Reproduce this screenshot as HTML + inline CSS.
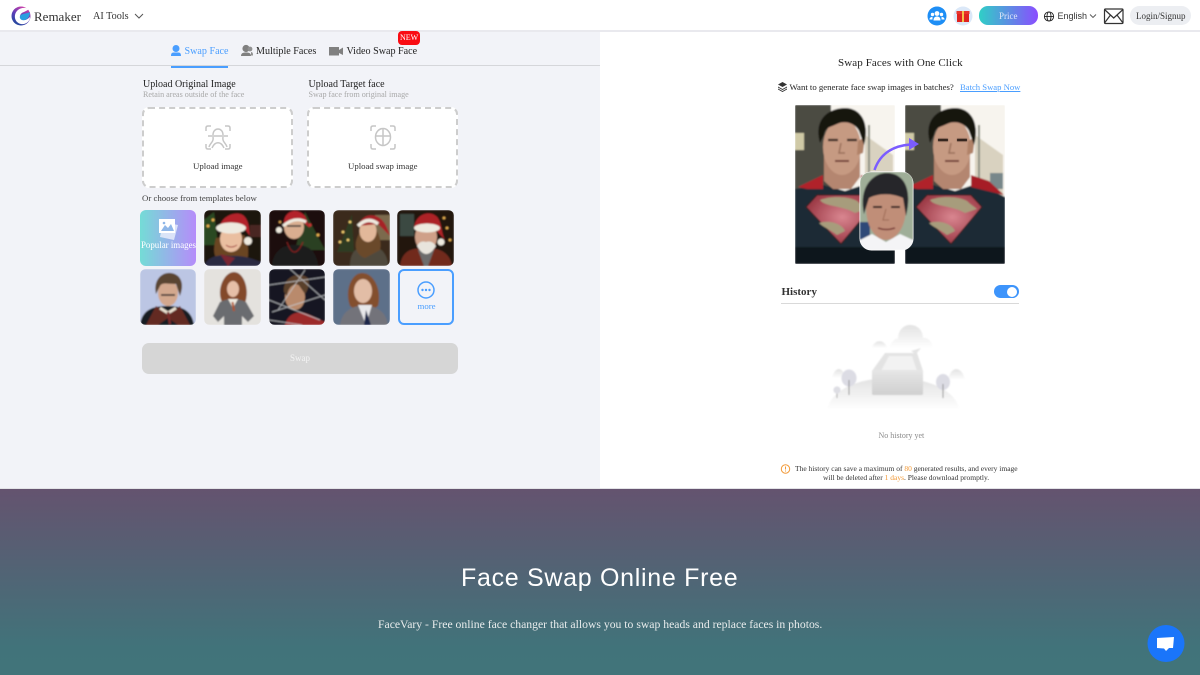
<!DOCTYPE html>
<html><head><meta charset="utf-8"><style>
html,body{margin:0;padding:0;width:1200px;height:675px;overflow:hidden;background:#f2f3f8;font-family:"Liberation Serif",serif;color:#222}
.t{position:absolute;white-space:nowrap;line-height:1}
.b{position:absolute;box-sizing:border-box}
.up{position:absolute;box-sizing:border-box;top:107px;width:151px;height:81px;background:#fff;border:2px dashed #cdcdcd;border-radius:7px}
svg{position:absolute;left:0;top:0}
</style></head><body>
<div class="b" style="left:0;top:0;width:1200px;height:30px;background:#fff"></div>
<div class="b" style="left:0;top:30px;width:1200px;height:2px;background:#e9e9ee"></div>
<div class="b" style="left:600px;top:32px;width:600px;height:456px;background:#fff"></div>
<div class="b" style="left:0;top:488px;width:1200px;height:1px;background:#e2e2e6"></div>
<div class="b" style="left:0;top:489px;width:1200px;height:186px;background:linear-gradient(#64536f,#41737a 85%,#41747a)"></div>
<div class="b" style="left:0;top:65px;width:600px;height:1px;background:#d5d6da"></div>
<div class="b" style="left:171px;top:66px;width:57px;height:1.500px;background:#4a9eff"></div>

<div class="up" style="left:142px"></div>
<div class="up" style="left:307px"></div>
<div class="b" style="left:142px;top:343px;width:316px;height:31px;background:#d6d6d6;border-radius:7px"></div>
<div class="b" style="left:979px;top:6px;width:59px;height:19px;border-radius:9px;background:linear-gradient(90deg,#2fcfc6,#8a4dff)"></div>
<div class="b" style="left:1130px;top:6px;width:61px;height:19px;border-radius:10px;background:#eceef2"></div>
<div class="b" style="left:398px;top:269px;width:56px;height:56px;border:2px solid #4a9eff;border-radius:6px"></div>
<div class="b" style="left:140px;top:210px;width:56px;height:56px;border-radius:6px;background:linear-gradient(90deg,#74dcd6,#b58cfa)"></div>
<div class="b" style="left:994px;top:285px;width:25px;height:13px;border-radius:7px;background:#3d94fb"></div>
<div class="b" style="left:1007px;top:286.500px;width:10px;height:10px;border-radius:50%;background:#fff"></div>
<div class="b" style="left:781px;top:303px;width:238px;height:1px;background:#d9d9d9"></div>
<div class="b" style="left:398px;top:31px;width:22px;height:14px;border-radius:4px;background:#f90b12"></div>

<svg width="1200" height="675" viewBox="0 0 1200 675">
<defs>
<filter id="bl"><feGaussianBlur stdDeviation="0.9"/></filter>
<filter id="bs"><feGaussianBlur stdDeviation="0.7"/></filter>
<linearGradient id="lg" x1="0.7" y1="0" x2="0.2" y2="1"><stop offset="0" stop-color="#d63fa8"/><stop offset=".5" stop-color="#5a3fb8"/><stop offset="1" stop-color="#1b4a9a"/></linearGradient>
<linearGradient id="fd" x1="0" y1="0" x2="0" y2="1"><stop offset="0" stop-color="#e2e2e2"/><stop offset="1" stop-color="#fff"/></linearGradient>
<linearGradient id="bx" x1="0" y1="0" x2="0" y2="1"><stop offset="0" stop-color="#e6e6e6"/><stop offset="1" stop-color="#cfcfcf"/></linearGradient>
<radialGradient id="sh" cx=".55" cy=".45" r=".55"><stop offset="0" stop-color="#d98690"/><stop offset="1" stop-color="#9c3a46"/></radialGradient>
<clipPath id="c1"><rect x="204" y="210" width="57" height="56" rx="6"/></clipPath>
<clipPath id="c2"><rect x="269" y="210" width="56" height="56" rx="6"/></clipPath>
<clipPath id="c3"><rect x="333" y="210" width="57" height="56" rx="6"/></clipPath>
<clipPath id="c4"><rect x="397" y="210" width="57" height="56" rx="6"/></clipPath>
<clipPath id="c5"><rect x="140" y="269" width="56" height="56" rx="6"/></clipPath>
<clipPath id="c6"><rect x="204" y="269" width="57" height="56" rx="6"/></clipPath>
<clipPath id="c7"><rect x="269" y="269" width="56" height="56" rx="6"/></clipPath>
<clipPath id="c8"><rect x="333" y="269" width="57" height="56" rx="6"/></clipPath>
<clipPath id="sl"><rect x="795" y="105" width="100" height="159" rx="1"/></clipPath>
<clipPath id="sr"><rect x="905" y="105" width="100" height="159" rx="1"/></clipPath>
<clipPath id="in"><rect x="860" y="172" width="53" height="78" rx="11"/></clipPath>
<g id="sup">
<rect x="0" y="0" width="100" height="159" fill="#f7f4ee"/>
<rect x="0" y="0" width="36" height="85" fill="#4b4b43"/>
<rect x="0" y="28" width="9" height="17" fill="#cfc9a6"/>
<path d="M70 30L98 50V110H70Z" fill="#d9d2c0"/><rect x="73" y="20" width="2" height="60" fill="#8d9084"/>
<rect x="85" y="68" width="13" height="16" fill="#78878a"/>
<path d="M0 84L28 80L50 86L68 80L92 88L100 92V159H0Z" fill="#1c2c34"/>
<path d="M3 82L28 70V84L12 84Z" fill="#b0202a"/><path d="M66 70L84 76L99 90L66 82Z" fill="#a61f28"/>
<path d="M29 50H65V72L56 84H38L29 76Z" fill="#b48670"/>
<ellipse cx="47" cy="42" rx="19" ry="28" fill="#c69a82"/>
<path d="M63 36L70 32L68 48L62 50Z" fill="#b08268"/>
<path d="M25 38C18 14 34 3 50 3C66 3 75 18 69 40L64 26C60 18 50 15 42 19C36 22 30 22 29 30Z" fill="#17120f"/>
<path d="M33 35H43M52 35H62" stroke="#33241d" stroke-width="2.200"/>
<path d="M46 38L44 48H50" stroke="#9a6f5a" stroke-width="1.500" fill="none"/>
<path d="M40 56H54" stroke="#6d3830" stroke-width="1.800"/>
<path d="M11 102L22 90H66L77 102L46 139Z" fill="url(#sh)" stroke="#2d1a1e" stroke-width="1"/>
<path d="M25 95C38 90 60 92 64 98L72 104L60 108C46 100 30 102 25 95Z" fill="#a79c7c"/>
<path d="M24 118C36 114 48 120 50 126L42 130C34 124 28 122 24 118Z" fill="#a79c7c"/>
<rect x="0" y="142" width="100" height="17" fill="#0c1216" opacity=".85"/>
</g>
</defs>

<!-- logo -->
<circle cx="21" cy="16" r="9.500" fill="url(#lg)"/>
<path d="M29 9C23 6 16 9 15 15C14 21 19 25 24 24C28 23 30 20 30 17C27 20 24 21 21 19C19 17 20 13 24 12C26 11 28 10 29 9Z" fill="#fff"/>
<path d="M30 12C27 14 22 13 20 16C19 19 22 21 25 20C28 19 30 16 30 12Z" fill="#2a9fe0"/>
<path d="M135 14L139 18L143 14" fill="none" stroke="#555" stroke-width="1"/>

<!-- tab icons -->
<circle cx="176" cy="48.500" r="3.500" fill="#4a9eff"/><path d="M171 56C171 52 173 52.500 176 52.500C179 52.500 181 52 181 56Z" fill="#4a9eff"/>
<circle cx="246" cy="48.500" r="3.600" fill="#808080"/><path d="M241 56C241 53 243 52.500 246 52.500C249 52.500 251 53 251 56Z" fill="#808080"/><circle cx="250" cy="49" r="2.400" fill="#909090"/><path d="M251 52C253 52 253 54 253 55.500H251Z" fill="#909090"/>
<rect x="329" y="47" width="10" height="8.500" fill="#808080"/><path d="M339 50L343 47.500V55L339 53Z" fill="#808080"/>

<!-- upload icons -->
<g fill="none" stroke="#c6c6c6" stroke-width="1.500">
<path d="M206 131V128Q206 126 208 126H211M225 126H228Q230 126 230 128V131M230 144V147Q230 149 228 149H225M211 149H208Q206 149 206 147V144"/>
<path d="M213 135C213 127 223 127 223 135M208 136H228M213 137C214 142 210 143 209 147M223 137C222 142 226 143 227 147M212 148C215 141 221 141 224 148"/>
<path d="M371 131V128Q371 126 373 126H376M390 126H393Q395 126 395 128V131M395 144V147Q395 149 393 149H390M376 149H373Q371 149 371 147V144"/>
<ellipse cx="383" cy="137" rx="7.500" ry="8.500"/><path d="M376 136H390M383 129V145"/>
</g>

<!-- header right icons -->
<circle cx="937" cy="16" r="9.500" fill="#1e8ef5"/>
<g fill="#fff"><circle cx="937" cy="13.500" r="2.400"/><circle cx="932.500" cy="14.500" r="1.700"/><circle cx="941.500" cy="14.500" r="1.700"/><path d="M933.500 20.500C933.500 17.500 935 16.500 937 16.500C939 16.500 940.500 17.500 940.500 20.500Z"/><path d="M929.500 19.500C929.500 17.500 931 17 932.500 17L932.500 19.500ZM944.500 19.500C944.500 17.500 943 17 941.500 17L941.500 19.500Z"/></g>
<circle cx="963" cy="16" r="9.500" fill="#dbe8f8"/>
<rect x="957" y="13" width="12" height="9" fill="#e0231f"/><rect x="956.500" y="11" width="13" height="3" fill="#e8352c"/><rect x="962" y="11" width="2" height="11" fill="#f4c04a"/>
<g fill="none" stroke="#222" stroke-width="0.900"><circle cx="1049" cy="16.500" r="4.600"/><ellipse cx="1049" cy="16.500" rx="2" ry="4.600"/><path d="M1044.400 16.500H1053.600"/></g>
<path d="M1090 14.500L1093 17.500L1096 14.500" fill="none" stroke="#555" stroke-width=".9"/>
<g fill="none" stroke="#333" stroke-width="1.200"><rect x="1104.500" y="9" width="18.500" height="14.500" rx="1"/><path d="M1104.500 9.500L1113.700 18L1123 9.500M1104.500 23L1110.500 15M1123 23L1117 15"/></g>

<!-- popular icon + more -->
<g><path d="M163 222L178 225L174 240L160 237Z" fill="#e6ecfa" opacity=".85"/><rect x="159" y="219" width="16" height="14" fill="#fff"/><path d="M161 231L165 225L168 228L171 224L174 231Z" fill="#8fb7e8"/><circle cx="164" cy="223" r="1.300" fill="#8fb7e8"/></g>
<circle cx="426" cy="290" r="8" fill="none" stroke="#4a9eff" stroke-width="1.500"/><g fill="#4a9eff"><circle cx="422.500" cy="290" r="1.200"/><circle cx="426" cy="290" r="1.200"/><circle cx="429.500" cy="290" r="1.200"/></g>

<!-- thumbs row 1 -->
<g clip-path="url(#c1)"><g filter="url(#bl)"><rect x="204" y="210" width="57" height="56" fill="#1e1410"/><path d="M204 220L214 212L218 245H204Z" fill="#2c4a20"/><circle cx="208" cy="226" r="1.500" fill="#e8b050"/><circle cx="213" cy="220" r="1.500" fill="#e8b050"/><rect x="250" y="225" width="11" height="12" fill="#4a2820"/>
<path d="M216 238C212 252 214 262 226 264H246C250 255 248 240 244 235Z" fill="#6b4524"/><ellipse cx="231" cy="239" rx="11" ry="13" fill="#eabfa0"/><path d="M204 266C208 256 220 254 231 256C245 255 255 260 261 262V266Z" fill="#2a2a42"/><path d="M220 254L235 258L228 266Z" fill="#7a2530"/><path d="M219 230C220 215 238 210 244 216C250 222 249 232 250 236L244 228Z" fill="#b4242a"/><ellipse cx="231" cy="228" rx="15" ry="5.500" fill="#eeeadf"/><circle cx="248" cy="241" r="4" fill="#eeeadf"/><path d="M226 245Q231 249 237 245" stroke="#a03a3a" fill="none"/></g></g>
<g clip-path="url(#c2)"><g filter="url(#bl)"><rect x="269" y="210" width="56" height="56" fill="#1d110c"/><path d="M305 212L325 250H295Z" fill="#2c3f20"/><circle cx="310" cy="225" r="1.600" fill="#c63030"/><circle cx="318" cy="235" r="1.500" fill="#e8b050"/><circle cx="280" cy="222" r="1.300" fill="#d8a050"/><path d="M272 266C274 248 286 245 296 245C310 245 316 252 318 266Z" fill="#1c1c1c"/><ellipse cx="294" cy="227" rx="10" ry="12" fill="#d9ae90"/><path d="M284 224C283 212 296 206 305 216L310 228L300 220Z" fill="#b3232a"/><path d="M283 226Q295 216 306 222" stroke="#eeeadf" stroke-width="3" fill="none"/><circle cx="279" cy="230" r="3" fill="#eeeadf"/><path d="M287 242Q294 262 303 242" stroke="#8a2020" fill="none"/><path d="M287 226H301" stroke="#333" stroke-width="1.500"/></g></g>
<g clip-path="url(#c3)"><g filter="url(#bl)"><rect x="333" y="210" width="57" height="56" fill="#3b2a1a"/><path d="M352 214L337 252H354Z" fill="#2e3a20"/><circle cx="343" cy="232" r="1.400" fill="#f4d070"/><circle cx="350" cy="222" r="1.400" fill="#f4d070"/><circle cx="340" cy="242" r="1.400" fill="#f4d070"/><circle cx="348" cy="240" r="1.400" fill="#f4d070"/><rect x="375" y="215" width="15" height="25" fill="#7b6a4e"/><path d="M350 266C350 250 358 246 370 246C382 246 388 256 388 266Z" fill="#4f4a3d"/><path d="M360 232C352 245 356 255 365 258L380 250C382 240 378 232 375 228Z" fill="#6b4a2a"/><ellipse cx="368" cy="231" rx="8.500" ry="11" fill="#e2b89a"/><path d="M358 226C362 214 374 212 382 220C386 224 388 230 390 236L378 224Z" fill="#a62228"/><path d="M358 226Q368 216 378 224" stroke="#eeeadf" stroke-width="3.500" fill="none"/></g></g>
<g clip-path="url(#c4)"><g filter="url(#bl)"><rect x="397" y="210" width="57" height="56" fill="#21140e"/><rect x="400" y="214" width="14" height="22" fill="#3a4a42"/><circle cx="447" cy="228" r="1.400" fill="#e8b050"/><circle cx="450" cy="240" r="1.400" fill="#e8b050"/><circle cx="444" cy="218" r="1.400" fill="#e8b050"/><path d="M400 266C402 250 412 248 426 248C442 248 450 254 452 266Z" fill="#71291f"/><path d="M418 250H434L428 266H424Z" fill="#6c6c6c"/><ellipse cx="426" cy="237" rx="11" ry="14" fill="#cfa088"/><path d="M417 246Q426 262 436 246Q432 240 426 242Q420 240 417 246Z" fill="#e8e4dc"/><path d="M414 228C416 212 432 210 438 218C442 224 441 232 445 240L434 228Z" fill="#ad2126"/><ellipse cx="427" cy="228" rx="13" ry="4.500" fill="#eeeadf"/><circle cx="441" cy="242" r="3.500" fill="#eeeadf"/></g></g>
<!-- thumbs row 2 -->
<g clip-path="url(#c5)"><g filter="url(#bl)"><rect x="140" y="269" width="56" height="56" fill="#bcc6e4"/><path d="M140 325C142 310 152 306 168 306C184 306 192 312 194 325Z" fill="#181a22"/><path d="M146 325L156 306L168 315L180 306L190 325H178L168 318L158 325Z" fill="#632a22"/><ellipse cx="168" cy="293" rx="10" ry="13" fill="#d3a88e"/><path d="M156 294C152 276 168 268 178 276C184 282 182 290 180 296L176 284C168 284 162 282 160 286Z" fill="#5a4530"/><path d="M161 295H175" stroke="#222" stroke-width="1.500"/><path d="M160 308L168 313L176 308" stroke="#e8e0d0" stroke-width="3" fill="none"/><path d="M168 312L170 324" stroke="#7a2a2a" stroke-width="2.500"/></g></g>
<g clip-path="url(#c6)"><g filter="url(#bl)"><rect x="204" y="269" width="57" height="56" fill="#e4e2de"/><path d="M222 302C216 290 224 272 234 272C244 272 250 290 245 303Z" fill="#834a2a"/><ellipse cx="233" cy="289" rx="6" ry="8" fill="#e6bfa8"/><path d="M220 302C228 298 238 298 246 302L254 316L248 322L242 316V325H224V316L218 322L213 316Z" fill="#6b6c70"/><path d="M228 299L233 308L238 299Z" fill="#f0ebe0"/><path d="M232.500 302L234 311" stroke="#b0522a" stroke-width="2"/></g></g>
<g clip-path="url(#c7)"><g filter="url(#bl)"><rect x="269" y="269" width="56" height="56" fill="#161820"/><path d="M285 325C288 312 300 310 310 315L325 322V325Z" fill="#9c2c2a"/><ellipse cx="295" cy="297" rx="10" ry="13" fill="#b98a6c"/><path d="M284 292C282 278 298 270 308 278C310 284 308 290 305 294L298 284C292 284 288 288 287 296Z" fill="#5a3f2a"/><path d="M269 285L325 277M272 312L325 295M269 300L320 320M290 269L325 300M269 320L302 325M305 270L278 310" stroke="#c6c8cc" stroke-width="1" fill="none" opacity=".8"/></g></g>
<g clip-path="url(#c8)"><g filter="url(#bl)"><rect x="333" y="269" width="57" height="56" fill="#5d7089"/><path d="M350 306C344 290 352 273 362 273C374 273 382 290 378 306L372 310H356Z" fill="#83502f"/><ellipse cx="363" cy="291" rx="9" ry="12" fill="#e2bda6"/><path d="M340 325C342 312 350 308 358 306H370C378 308 386 312 388 325Z" fill="#73737a"/><path d="M358 305L366 325L372 305Z" fill="#e8e8ea"/><path d="M366 310L371 325H364Z" fill="#1c2648"/></g></g>

<!-- Swap example images -->
<g clip-path="url(#sl)"><use href="#sup" x="795" y="105" filter="url(#bs)"/></g>
<g clip-path="url(#sr)"><use href="#sup" x="905" y="105" filter="url(#bs)"/><path d="M938 140H948M957 140H967" stroke="#221611" stroke-width="2.500" opacity=".7"/></g>
<path d="M874.500 170C880 154 892 146 910 144.500" fill="none" stroke="#7b5cff" stroke-width="2.500"/>
<path d="M909 138L919 144L909 150Z" fill="#7b5cff"/>
<rect x="859.500" y="171.500" width="54" height="79" rx="12" fill="#fff"/>
<g clip-path="url(#in)"><g filter="url(#bs)"><rect x="860" y="172" width="53" height="78" fill="#9fae98"/><rect x="860" y="222" width="10" height="20" fill="#2e4a78"/><path d="M860 250V240L872 234L886 242L900 234L913 240V250Z" fill="#f4f4f6"/><ellipse cx="886" cy="208" rx="20" ry="32" fill="#c08e78"/><path d="M864 214C858 186 874 172 888 173C906 174 912 192 906 216L903 198C890 192 876 194 869 198Z" fill="#28252c"/><path d="M873 207H882M891 207H900" stroke="#2b1e1a" stroke-width="2"/><path d="M878 228Q886 231 895 228" stroke="#7a3d38" stroke-width="1.500" fill="none"/><path d="M886 209L883 220H889" stroke="#9d6a54" fill="none"/></g></g>
<!-- stack icon -->
<g fill="#333"><path d="M782.500 82L787 84.500L782.500 87L778 84.500Z"/><path d="M778 86.500L782.500 89L787 86.500V87.500L782.500 90L778 87.500Z"/><path d="M778 88.500L782.500 91L787 88.500V89.500L782.500 92L778 89.500Z"/></g>

<!-- Empty state -->
<g filter="url(#bs)">
<path d="M827 410C832 388 860 378 893 378C926 378 954 388 960 410Z" fill="url(#fd)"/>
<path d="M889 348C892 340 896 338 898 339C898 330 904 325 910 325C918 325 923 331 923 338C928 337 932 342 933 348Z" fill="url(#fd)"/>
<path d="M872 348C874 339 885 339 887 348Z" fill="url(#fd)"/>
<path d="M832 378C835 366 843 366 845 378Z" fill="url(#fd)"/><path d="M948 380C951 365 962 366 965 380Z" fill="url(#fd)"/>
<path d="M872 371L885 353H917L923 371Z" fill="#e3e3e3"/><path d="M881 371L889 356H912L917 371Z" fill="#f2f2f2"/>
<rect x="872" y="370" width="51" height="25" rx="1.500" fill="url(#bx)"/>
<path d="M911 351L921 348L916 354Z" fill="#e4e4e4"/>
<ellipse cx="849" cy="378" rx="7.500" ry="8.500" fill="#dcdce4"/><path d="M849 380V395" stroke="#8e8e8e"/>
<path d="M837 391V398" stroke="#aaa"/><circle cx="837" cy="390" r="3.600" fill="#dedee4"/>
<ellipse cx="943" cy="382" rx="7" ry="8" fill="#dcdce4"/><path d="M943 384V398" stroke="#8e8e8e"/>
</g>
<circle cx="785.500" cy="469" r="4.200" fill="none" stroke="#f29a38" stroke-width="1"/><path d="M785.500 466.500V469.500M785.500 470.500V471.500" stroke="#f29a38" stroke-width="1"/>

<!-- chat -->
<circle cx="1166" cy="643.500" r="18.500" fill="#1a75fa"/>
<path d="M1157 638L1174 637L1173 648H1169L1166 651L1164 648.500L1157 648Z" fill="#fff"/>
</svg>

<div class="t" style="left:34px;top:10px;font-size:13px;color:#333">Remaker</div>
<div class="t" style="left:93px;top:11.500px;font-size:10.200px;color:#333">AI Tools</div>
<div class="t" style="left:184.500px;top:46.500px;font-size:10.100px;color:#4a9eff">Swap Face</div>
<div class="t" style="left:256px;top:46.500px;font-size:10.100px;color:#222">Multiple Faces</div>
<div class="t" style="left:346.500px;top:46.500px;font-size:10.100px;color:#222">Video Swap Face</div>
<div class="t" style="left:400px;top:34px;font-size:8px;color:#fff">NEW</div>
<div class="t" style="left:143px;top:79.500px;font-size:10px;color:#222">Upload Original Image</div>
<div class="t" style="left:143px;top:91px;font-size:8.100px;color:#a8a8a8">Retain areas outside of the face</div>
<div class="t" style="left:308.500px;top:79.500px;font-size:10px;color:#222">Upload Target face</div>
<div class="t" style="left:308.500px;top:91px;font-size:8.100px;color:#a8a8a8">Swap face from original image</div>
<div class="t" style="left:193px;top:161.500px;font-size:8.800px;color:#333">Upload image</div>
<div class="t" style="left:348px;top:161.500px;font-size:8.750px;color:#333">Upload swap image</div>
<div class="t" style="left:142px;top:194px;font-size:8.800px;color:#444">Or choose from templates below</div>
<div class="t" style="left:141px;top:240.500px;font-size:8.900px;color:#fff">Popular images</div>
<div class="t" style="left:417.500px;top:302px;font-size:8.800px;color:#4a9eff">more</div>
<div class="t" style="left:290px;top:353.500px;font-size:9px;color:#f3f3f3">Swap</div>

<div class="t" style="left:999px;top:12px;font-size:9px;color:#dfe6f8">Price</div>
<div class="t" style="left:1057.500px;top:11.500px;font-size:9px;font-family:'Liberation Sans',sans-serif;color:#333">English</div>
<div class="t" style="left:1136px;top:11.500px;font-size:9px;color:#333">Login/Signup</div>

<div class="t" style="left:838px;top:57.500px;font-size:11px;color:#222;letter-spacing:.1px">Swap Faces with One Click</div>
<div class="t" style="left:789.500px;top:83px;font-size:8.750px;color:#222">Want to generate face swap images in batches?</div>
<div class="t" style="left:960px;top:83px;font-size:8.650px;color:#4a9eff;text-decoration:underline">Batch Swap Now</div>
<div class="t" style="left:781.500px;top:286.500px;font-size:11px;font-weight:bold;color:#333">History</div>
<div class="t" style="left:878.500px;top:432px;font-size:8px;color:#8a8a8a">No history yet</div>
<div class="t" style="left:795px;top:464.500px;font-size:7.500px;color:#333">The history can save a maximum of <span style="color:#f29a38">80</span> generated results, and every image</div>
<div class="t" style="left:823px;top:474px;font-size:7.500px;color:#333">will be deleted after <span style="color:#f29a38">1 days</span>. Please download promptly.</div>

<div class="t" style="left:461px;top:565.500px;font-size:25px;font-family:'Liberation Sans',sans-serif;color:#fff;letter-spacing:.7px">Face Swap Online Free</div>
<div class="t" style="left:378px;top:619px;font-size:11.700px;color:#e8ecec">FaceVary - Free online face changer that allows you to swap heads and replace faces in photos.</div>
</body></html>
